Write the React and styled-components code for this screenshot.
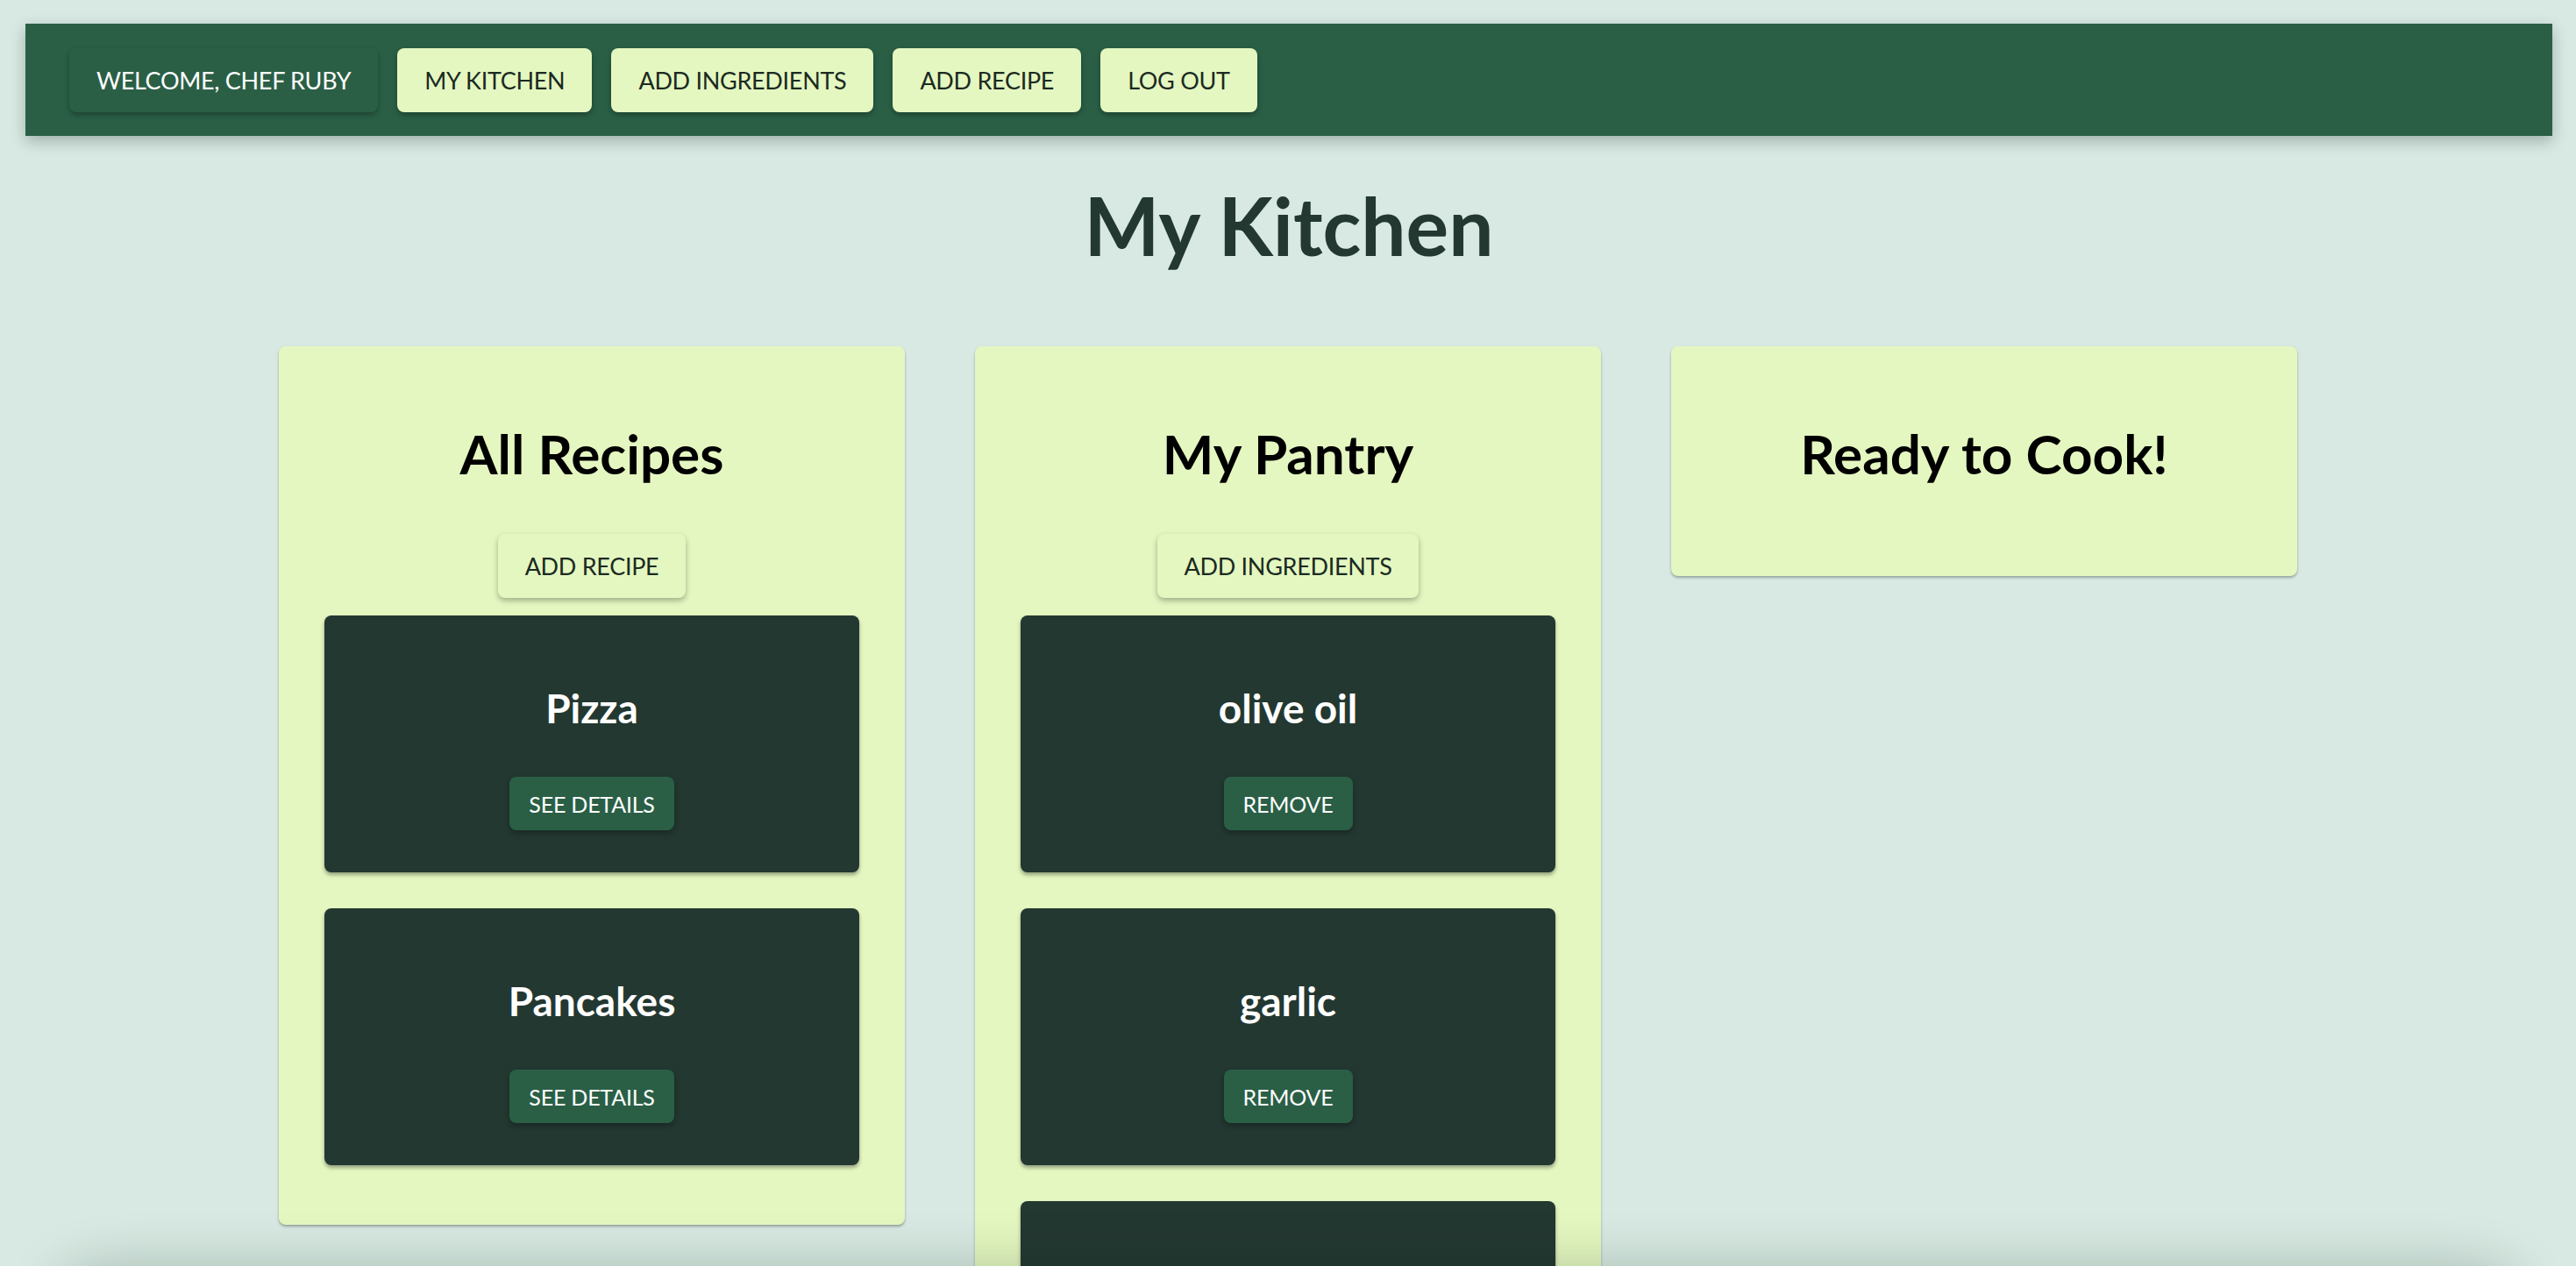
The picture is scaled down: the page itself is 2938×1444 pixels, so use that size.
import React from 'react';
import styled, { createGlobalStyle } from 'styled-components';

const GlobalStyle = createGlobalStyle`
  html, body {
    margin: 0;
    padding: 0;
    background: #d7e9e2;
    font-family: 'Lato', 'Noto Sans', sans-serif;
  }
`;

const Page = styled.div`
  padding: 27px 27px 0 29px;
`;

const NavBar = styled.nav`
  display: flex;
  align-items: center;
  gap: 22px;
  height: 128px;
  padding: 0 50px;
  background: #2a5f46;
  box-shadow: 0 6px 16px rgba(0, 0, 0, 0.25);
`;

const NavButton = styled.button`
  height: 73px;
  padding: 0 31px;
  border: none;
  border-radius: 8px;
  font-family: inherit;
  font-size: 27px;
  letter-spacing: -0.3px;
  text-transform: uppercase;
  cursor: pointer;
  background: ${(props) => (props.dark ? '#2a5f46' : '#e4f7c0')};
  color: ${(props) => (props.dark ? '#ffffff' : '#1b2a22')};
  box-shadow: 0 3px 6px rgba(0, 0, 0, 0.3);
`;

const Title = styled.h1`
  margin: 55px 0 0;
  font-size: 91px;
  line-height: 93px;
  font-weight: 700;
  text-align: center;
  color: #233831;
`;

const Columns = styled.div`
  display: flex;
  justify-content: center;
  align-items: flex-start;
  gap: 80px;
  margin-top: 92px;
  margin-left: -2px;
`;

const Panel = styled.section`
  display: flex;
  flex-direction: column;
  align-items: center;
  width: 714px;
  box-sizing: border-box;
  padding: 48px 52px;
  background: #e4f7c0;
  border-radius: 8px;
  box-shadow: 0 2px 3px rgba(0, 0, 0, 0.3);
`;

const PanelTitle = styled.h2`
  margin: 42px 0 60px;
  font-size: 62px;
  line-height: 64px;
  font-weight: 700;
  color: #000;
`;

const PanelButton = styled(NavButton)`
  margin-bottom: 20px;
`;

const ItemList = styled.div`
  display: flex;
  flex-direction: column;
  gap: 41px;
  width: 100%;
  padding-bottom: 20px;
`;

const ItemCard = styled.div`
  display: flex;
  flex-direction: column;
  align-items: center;
  height: 293px;
  box-sizing: border-box;
  padding: 82px 0 0;
  background: #233831;
  border-radius: 8px;
  box-shadow: 0 3px 4px rgba(0, 0, 0, 0.35);
`;

const ItemName = styled.h3`
  margin: 0 0 54px;
  font-size: 46px;
  line-height: 48px;
  font-weight: 700;
  color: #ffffff;
`;

const SmallButton = styled.button`
  height: 61px;
  padding: 0 22px;
  border: none;
  border-radius: 8px;
  background: #2a5f46;
  color: #ffffff;
  font-family: inherit;
  font-size: 25px;
  letter-spacing: -0.2px;
  text-transform: uppercase;
  cursor: pointer;
  box-shadow: 0 3px 6px rgba(0, 0, 0, 0.3);
`;

const BottomShade = styled.div`
  position: fixed;
  left: 60px;
  right: 60px;
  top: 100vh;
  height: 300px;
  border-radius: 60px;
  background: #d7e9e2;
  box-shadow: 0 0 60px rgba(0, 30, 20, 0.22);
`;

const recipes = ['Pizza', 'Pancakes'];
const pantry = ['olive oil', 'garlic', 'salt'];

const App = () => {
  return (
    <>
      <GlobalStyle />
      <Page>
        <NavBar>
          <NavButton dark>Welcome, Chef Ruby</NavButton>
          <NavButton>My Kitchen</NavButton>
          <NavButton>Add Ingredients</NavButton>
          <NavButton>Add Recipe</NavButton>
          <NavButton>Log Out</NavButton>
        </NavBar>

        <Title>My Kitchen</Title>

        <Columns>
          <Panel>
            <PanelTitle>All Recipes</PanelTitle>
            <PanelButton>Add Recipe</PanelButton>
            <ItemList>
              {recipes.map((recipe) => (
                <ItemCard key={recipe}>
                  <ItemName>{recipe}</ItemName>
                  <SmallButton>See Details</SmallButton>
                </ItemCard>
              ))}
            </ItemList>
          </Panel>

          <Panel>
            <PanelTitle>My Pantry</PanelTitle>
            <PanelButton>Add Ingredients</PanelButton>
            <ItemList>
              {pantry.map((item) => (
                <ItemCard key={item}>
                  <ItemName>{item}</ItemName>
                  <SmallButton>Remove</SmallButton>
                </ItemCard>
              ))}
            </ItemList>
          </Panel>

          <Panel>
            <PanelTitle>Ready to Cook!</PanelTitle>
          </Panel>
        </Columns>
      </Page>
      <BottomShade />
    </>
  );
};

export default App;
